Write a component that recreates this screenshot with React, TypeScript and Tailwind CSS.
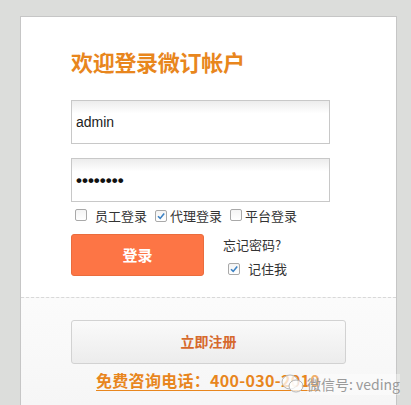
import React from "react";

const cjk = { fontFamily: '"Noto Sans CJK SC", "Noto Sans", sans-serif' };

function Box({ checked }: { checked?: boolean }) {
  return (
    <span className="inline-flex h-[12px] w-[12px] items-center justify-center rounded-[2px] border border-[#a9a9a9] bg-[linear-gradient(#f4f4f4,#ffffff)]">
      {checked && (
        <svg width="10" height="10" viewBox="0 0 10 10">
          <path d="M2 5.2 L4.2 7.4 L8.2 2.4" fill="none" stroke="#3c82c4" strokeWidth="1.6" />
        </svg>
      )}
    </span>
  );
}

export default function App() {
  return (
    <div className="h-[405px] w-[411px] overflow-hidden bg-[#dcdddb] pl-[20px] pt-[16px]" style={cjk}>
      <div className="relative h-[400px] w-[377px] border border-b-0 border-[#c6c6c6] bg-white">
        <div className="px-[50px] pt-[29px]">
          <div className="text-[22px] font-bold leading-[30px] tracking-[-0.3px] text-[#e8861d]">欢迎登录微订帐户</div>
          <div className="mt-[24px] flex h-[44px] w-[259px] items-center border border-[#c8c8c8] bg-[linear-gradient(#ececec,#ffffff_30%,#ffffff)] pl-[4px] text-[14px] text-[#222]" style={{ fontFamily: '"Liberation Sans", sans-serif' }}>
            admin
          </div>
          <div className="mt-[14px] flex h-[44px] w-[259px] items-center border border-[#c8c8c8] bg-[linear-gradient(#ececec,#ffffff_30%,#ffffff)] pl-[4px] text-[17px] font-bold leading-none text-[#111]" style={{ fontFamily: '"Liberation Sans", sans-serif' }}>
            ••••••••
          </div>
          <div className="mt-[5px] flex h-[18px] items-center text-[13px] text-[#333]">
            <span className="ml-[4px]"><Box /></span>
            <span className="ml-[8px]">员工登录</span>
            <span className="ml-[8px]"><Box checked /></span>
            <span className="ml-[3px]">代理登录</span>
            <span className="ml-[8px]"><Box /></span>
            <span className="ml-[3px]">平台登录</span>
          </div>
          <div className="mt-[9px] flex">
            <div className="flex h-[42px] w-[133px] items-center justify-center rounded-[3px] border border-[#ea6c3d] bg-[#fd7545] text-[15px] font-bold text-white">
              登录
            </div>
            <div className="ml-[19px] pt-[2px] text-[13px] text-[#333]">
              <div className="leading-[18px]">忘记密码?</div>
              <div className="mt-[5px] flex items-center">
                <span className="ml-[5px]"><Box checked /></span>
                <span className="ml-[8px]">记住我</span>
              </div>
            </div>
          </div>
        </div>
        <div className="mt-[18px] h-[130px] border-t border-dashed border-[#d8d8d8] bg-[linear-gradient(#fbfbfb,#f5f5f5)]">
          <div className="ml-[50px] mt-[22px] flex h-[44px] w-[275px] items-center justify-center rounded-[3px] border border-[#d2d2d2] bg-[linear-gradient(#fafafa,#ececec)] text-[14px] font-bold text-[#d6692c]">
            立即注册
          </div>
          <div className="mt-[5px] ml-[75px] text-[16px] font-bold leading-[22px] tracking-[0.3px] text-[#e8861d] underline underline-offset-[3px]">
            免费咨询电话：400-030-2010
          </div>
        </div>
        <div className="absolute left-[259px] top-[355px] flex items-center whitespace-nowrap text-[14px] text-[#9a9a9a]">
          <svg width="26" height="24" viewBox="0 0 26 24">
            <ellipse cx="10" cy="10" rx="8" ry="7" fill="rgba(255,255,255,0.75)" stroke="#b5b5b5" strokeWidth="1" />
            <ellipse cx="16" cy="14" rx="7" ry="6" fill="rgba(255,255,255,0.75)" stroke="#b5b5b5" strokeWidth="1" />
          </svg>
          <span className="ml-[1px] bg-[rgba(255,255,255,0.35)]">微信号: veding</span>
        </div>
      </div>
    </div>
  );
}
